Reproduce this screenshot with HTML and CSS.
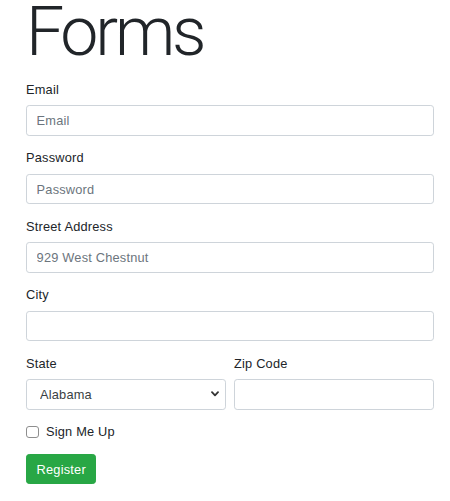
FILE: index.html
```html
<!DOCTYPE html>
<html lang="en">
<head>
<meta charset="utf-8">
<title>Forms</title>
<link rel="stylesheet" href="styles.css">
</head>
<body>
<div class="container">
  <h1 class="title">Forms</h1>
  <form class="form">
    <div class="form-group">
      <label class="label" for="email">Email</label>
      <input class="control" id="email" type="email" placeholder="Email">
    </div>
    <div class="form-group">
      <label class="label" for="password">Password</label>
      <input class="control" id="password" type="password" placeholder="Password">
    </div>
    <div class="form-group">
      <label class="label" for="street">Street Address</label>
      <input class="control" id="street" type="text" placeholder="929 West Chestnut">
    </div>
    <div class="form-group">
      <label class="label" for="city">City</label>
      <input class="control" id="city" type="text">
    </div>
    <div class="form-row">
      <div class="form-group">
        <label class="label" for="state">State</label>
        <div class="select-wrap">
          <select class="control select" id="state">
            <option>Alabama</option>
          </select>
          <svg class="chevron" width="8" height="6" viewBox="0 0 8 6" aria-hidden="true">
            <path d="M1 1.2 L4 4.3 L7 1.2" fill="none" stroke="#333" stroke-width="1.8" stroke-linecap="round" stroke-linejoin="round"/>
          </svg>
        </div>
      </div>
      <div class="form-group">
        <label class="label" for="zip">Zip Code</label>
        <input class="control" id="zip" type="text">
      </div>
    </div>
    <div class="form-check">
      <input class="check" id="signup" type="checkbox">
      <label class="check-label" for="signup">Sign Me Up</label>
    </div>
    <button class="btn" type="submit">Register</button>
  </form>
</div>
</body>
</html>
```

FILE: styles.css
```css
* {
  box-sizing: border-box;
}

body {
  margin: 0;
  background: #ffffff;
  color: #212529;
  font-family: "Liberation Sans", Arial, sans-serif;
  font-size: 12.8px;
  line-height: 19.2px;
  letter-spacing: 0.2px;
}

.container {
  padding: 0 16px 0 26px;
}

.title {
  margin: 0 0 15.8px 0;
  font-family: Roboto, "Liberation Sans", sans-serif;
  font-weight: 300;
  font-size: 68px;
  line-height: 64px;
  letter-spacing: -3.2px;
  color: #212529;
}

.form {
  display: flex;
  flex-direction: column;
}

.form-group {
  display: flex;
  flex-direction: column;
  margin-bottom: 12.5px;
}

.label {
  display: block;
  margin-bottom: 6.4px;
  line-height: 19.2px;
}

.control {
  display: block;
  width: 100%;
  height: 30.4px;
  padding: 4.8px 9.6px;
  font-family: inherit;
  font-size: 12.8px;
  line-height: 19.2px;
  letter-spacing: 0.2px;
  color: #495057;
  background: #ffffff;
  border: 1px solid #ced4da;
  border-radius: 3.2px;
  outline: none;
}

.control::placeholder {
  color: #6c757d;
  opacity: 1;
}

.form-row {
  display: grid;
  grid-template-columns: 1fr 1fr;
  column-gap: 8px;
}

.select-wrap {
  position: relative;
}

.select {
  appearance: none;
  -webkit-appearance: none;
  padding-left: 13px;
  color: #3a3f44;
}

.chevron {
  position: absolute;
  right: 7px;
  top: 12px;
  pointer-events: none;
}

.form-check {
  display: flex;
  align-items: center;
  margin-bottom: 12.5px;
}

.check {
  appearance: none;
  -webkit-appearance: none;
  width: 12.5px;
  height: 12.5px;
  margin: 0 7.5px 0 0;
  border: 1px solid #8e8e8e;
  border-radius: 3px;
  background: #ffffff;
}

.check-label {
  line-height: 19.2px;
}

.btn {
  align-self: flex-start;
  height: 30.4px;
  padding: 4.8px 9.6px;
  font-family: inherit;
  font-size: 12.8px;
  line-height: 19.2px;
  letter-spacing: 0.2px;
  color: #ffffff;
  background: #28a745;
  border: 1px solid #28a745;
  border-radius: 3.2px;
}
```
